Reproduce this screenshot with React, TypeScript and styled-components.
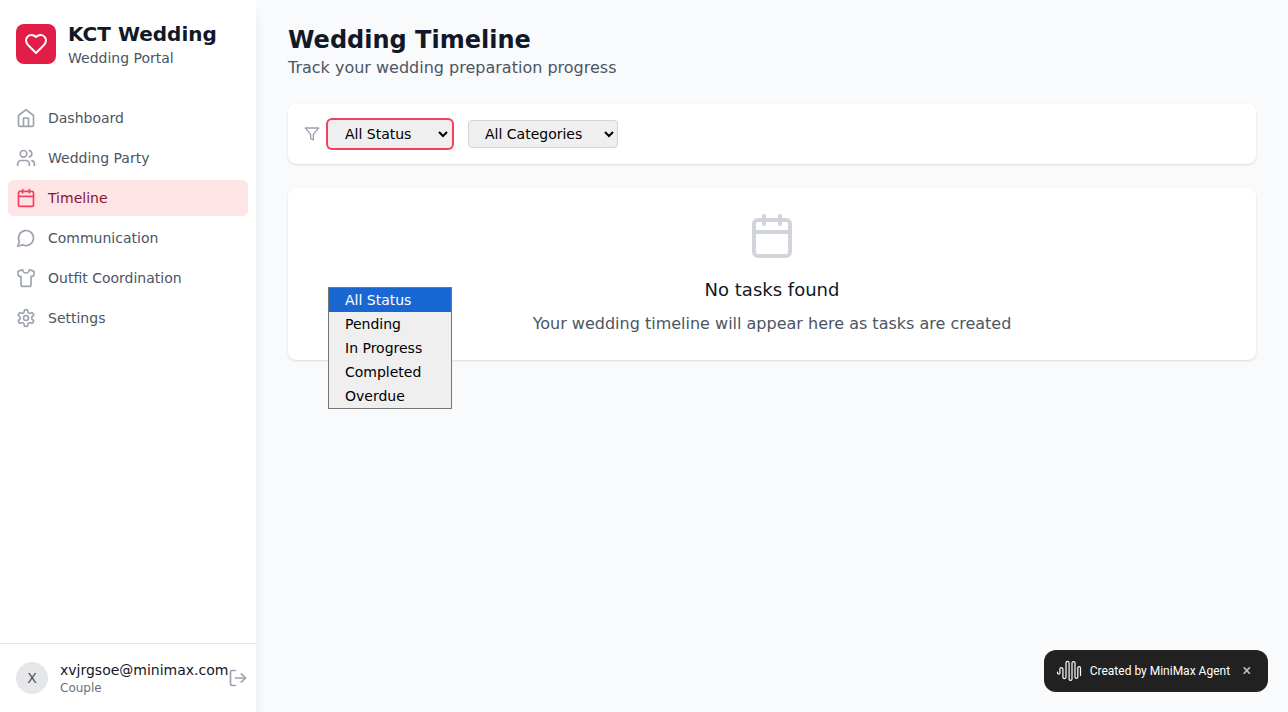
import React from 'react';
import styled, { createGlobalStyle, css } from 'styled-components';
import { Users, Calendar, Shirt, LogOut } from 'lucide-react';

const GlobalStyle = createGlobalStyle`
  *, *::before, *::after { box-sizing: border-box; }
  body { margin: 0; background: #f9fafb; font-family: "DejaVu Sans", sans-serif; line-height: 1.5; color: #111827; }
  h1, h2, h3, p { margin: 0; }
  button, select { font-family: inherit; }
`;

const Shell = styled.div`
  display: flex;
  height: 100vh;
  overflow: hidden;
  background: #f9fafb;
`;

const Sidebar = styled.aside`
  display: flex;
  flex-direction: column;
  flex: none;
  width: 256px;
  background: #fff;
  box-shadow: 0 10px 15px -3px rgba(0, 0, 0, 0.1), 0 4px 6px -4px rgba(0, 0, 0, 0.1);
`;

const Brand = styled.div`
  display: flex;
  align-items: center;
  gap: 12px;
  padding: 20px 16px 0;
`;

const BrandMark = styled.div`
  display: grid;
  place-items: center;
  width: 40px;
  height: 40px;
  border-radius: 8px;
  background: #e11d48;
  color: #fff;
`;

const BrandName = styled.h1`
  font-size: 20px;
  line-height: 28px;
  font-weight: 700;
`;

const BrandSub = styled.p`
  font-size: 14px;
  line-height: 20px;
  color: #4b5563;
`;

const Nav = styled.nav`
  display: flex;
  flex-direction: column;
  flex: 1;
  gap: 4px;
  padding: 32px 8px 0;
`;

const NavItem = styled.a<{ $active?: boolean }>`
  display: flex;
  align-items: center;
  gap: 12px;
  height: 36px;
  padding: 8px;
  border-radius: 6px;
  font-size: 14px;
  line-height: 20px;
  color: #4b5563;
  svg { color: #9ca3af; }
  ${({ $active }) => $active && css`
    background: #ffe4e6;
    color: #881337;
    svg { color: #f43f5e; }
  `}
`;

const Account = styled.div`
  display: flex;
  align-items: center;
  height: 69px;
  padding: 16px;
  border-top: 1px solid #e5e7eb;
`;

const Avatar = styled.div`
  display: grid;
  place-items: center;
  flex: none;
  width: 32px;
  height: 32px;
  margin-right: 12px;
  border-radius: 50%;
  background: #e5e7eb;
  color: #4b5563;
  font-size: 14px;
`;

const Email = styled.p`
  font-size: 14px;
  line-height: 20px;
`;

const Role = styled.p`
  font-size: 12px;
  line-height: 16px;
  color: #6b7280;
`;

const LogoutButton = styled.button`
  display: flex;
  flex: none;
  padding: 0;
  border: 0;
  background: none;
  color: #9ca3af;
`;

const Main = styled.main`
  display: flex;
  flex-direction: column;
  flex: 1;
  gap: 24px;
  padding: 24px 32px;
`;

const Title = styled.h1`
  font-size: 24px;
  line-height: 32px;
  font-weight: 700;
`;

const Subtitle = styled.p`
  font-size: 16px;
  line-height: 24px;
  color: #4b5563;
`;

const Card = styled.section`
  border-radius: 8px;
  background: #fff;
  box-shadow: 0 1px 3px rgba(0, 0, 0, 0.1), 0 1px 2px -1px rgba(0, 0, 0, 0.1);
`;

const FilterBar = styled(Card)`
  display: flex;
  align-items: center;
  height: 60px;
  padding: 16px;
  color: #9ca3af;
`;

const SelectWrap = styled.div<{ $width: number; $gap: number }>`
  position: relative;
  width: ${({ $width }) => $width}px;
  margin-left: ${({ $gap }) => $gap}px;
`;

const Select = styled.select<{ $focused?: boolean }>`
  display: block;
  width: 100%;
  height: 28px;
  padding: 4px 12px;
  border: 1px solid #d1d5db;
  border-radius: 4px;
  background: #efefef;
  color: #000;
  font-size: 14px;
  line-height: 20px;
  outline: none;
  ${({ $focused }) => $focused && css`
    border-color: transparent;
    box-shadow: 0 0 0 2px #f43f5e;
  `}
`;

const Menu = styled.div`
  position: absolute;
  top: 167px;
  left: 0;
  width: 124px;
  border: 1px solid #767676;
  background: #efefef;
  color: #000;
`;

const MenuItem = styled.div<{ $selected?: boolean }>`
  height: 24px;
  padding: 0 16px;
  font-size: 14px;
  line-height: 24px;
  white-space: nowrap;
  ${({ $selected }) => $selected && css`
    background: #1967d2;
    color: #fff;
  `}
`;

const Empty = styled(Card)`
  display: flex;
  flex-direction: column;
  align-items: center;
  height: 172px;
  padding-top: 24px;
  color: #d1d5db;
`;

const EmptyTitle = styled.h3`
  margin-top: 16px;
  font-size: 18px;
  line-height: 28px;
  font-weight: 400;
  color: #111827;
`;

const EmptyText = styled.p`
  margin-top: 8px;
  font-size: 16px;
  line-height: 24px;
  color: #4b5563;
`;

const Badge = styled.div`
  position: fixed;
  right: 20px;
  bottom: 20px;
  display: flex;
  align-items: center;
  width: 224px;
  height: 42px;
  padding: 0 12px;
  border-radius: 12px;
  background: #212121;
  color: #fff;
  font-family: Roboto, sans-serif;
  font-size: 12px;
  font-weight: 400;
`;

const BadgeText = styled.span`
  margin-left: 7.7px;
  white-space: nowrap;
`;

const BadgeClose = styled.span`
  margin-left: auto;
  margin-right: 5px;
  font-size: 16px;
  line-height: 16px;
  font-weight: 500;
  color: #bdbdbd;
`;

const Wave = () => (
  <svg width="26" height="24" viewBox="0 0 26 24" fill="none" stroke="#f5f5f5" strokeWidth="1.25" strokeLinecap="round">
    <path d="M1.5 13v1a1.2 1.2 0 0 0 2.4 0v-4a1.5 1.5 0 0 1 3 0v8a1.55 1.55 0 0 0 3.1 0V4a1.55 1.55 0 0 1 3.1 0v16a1.45 1.45 0 0 0 2.9 0V4a1.5 1.5 0 0 1 3 0v14a1.4 1.4 0 0 0 2.8 0V9a1.35 1.35 0 0 1 2.7 0v7.5" />
  </svg>
);

const HeartIcon = () => (
  <svg width="24" height="24" viewBox="0 0 24 24" fill="none" stroke="currentColor" strokeWidth="2" strokeLinecap="round" strokeLinejoin="round">
    <path d="M19 14c1.49-1.46 3-3.21 3-5.5A5.5 5.5 0 0 0 16.5 3c-1.76 0-3 .5-4.5 2-1.5-1.5-2.74-2-4.5-2A5.5 5.5 0 0 0 2 8.5c0 2.3 1.5 4.05 3 5.5l7 7Z" />
  </svg>
);

const HomeIcon = () => (
  <svg width="20" height="20" viewBox="0 0 24 24" fill="none" stroke="currentColor" strokeWidth="2" strokeLinecap="round" strokeLinejoin="round">
    <path d="m3 9 9-7 9 7v11a2 2 0 0 1-2 2H5a2 2 0 0 1-2-2z" />
    <path d="M9 22V12h6v10" />
  </svg>
);

const ChatIcon = () => (
  <svg width="20" height="20" viewBox="0 0 24 24" fill="none" stroke="currentColor" strokeWidth="2" strokeLinecap="round" strokeLinejoin="round">
    <path d="M7.9 20A9 9 0 1 0 4 16.1L2 22Z" />
  </svg>
);

const GearIcon = () => (
  <svg width="20" height="20" viewBox="0 0 24 24" fill="none" stroke="currentColor" strokeWidth="2" strokeLinecap="round" strokeLinejoin="round">
    <path d="M12.22 2h-.44a2 2 0 0 0-2 2v.18a2 2 0 0 1-1 1.73l-.43.25a2 2 0 0 1-2 0l-.15-.08a2 2 0 0 0-2.73.73l-.22.38a2 2 0 0 0 .73 2.73l.15.1a2 2 0 0 1 1 1.72v.51a2 2 0 0 1-1 1.74l-.15.09a2 2 0 0 0-.73 2.73l.22.38a2 2 0 0 0 2.73.73l.15-.08a2 2 0 0 1 2 0l.43.25a2 2 0 0 1 1 1.73V20a2 2 0 0 0 2 2h.44a2 2 0 0 0 2-2v-.18a2 2 0 0 1 1-1.73l.43-.25a2 2 0 0 1 2 0l.15.08a2 2 0 0 0 2.73-.73l.22-.39a2 2 0 0 0-.73-2.73l-.15-.08a2 2 0 0 1-1-1.74v-.5a2 2 0 0 1 1-1.74l.15-.09a2 2 0 0 0 .73-2.73l-.22-.38a2 2 0 0 0-2.73-.73l-.15.08a2 2 0 0 1-2 0l-.43-.25a2 2 0 0 1-1-1.73V4a2 2 0 0 0-2-2z" />
    <circle cx="12" cy="12" r="3" />
  </svg>
);

const FunnelIcon = () => (
  <svg width="16" height="16" viewBox="0 0 24 24" fill="none" stroke="currentColor" strokeWidth="2" strokeLinecap="round" strokeLinejoin="round">
    <polygon points="22 3 2 3 10 12.46 10 19 14 21 14 12.46 22 3" />
  </svg>
);

const navItems = [
  { label: 'Dashboard', icon: <HomeIcon /> },
  { label: 'Wedding Party', icon: <Users size={20} /> },
  { label: 'Timeline', icon: <Calendar size={20} />, active: true },
  { label: 'Communication', icon: <ChatIcon /> },
  { label: 'Outfit Coordination', icon: <Shirt size={20} /> },
  { label: 'Settings', icon: <GearIcon /> },
];

const statuses = ['All Status', 'Pending', 'In Progress', 'Completed', 'Overdue'];

export default function App() {
  return (
    <>
      <GlobalStyle />
      <Shell>
        <Sidebar>
          <Brand>
            <BrandMark><HeartIcon /></BrandMark>
            <div>
              <BrandName>KCT Wedding</BrandName>
              <BrandSub>Wedding Portal</BrandSub>
            </div>
          </Brand>
          <Nav>
            {navItems.map(({ label, icon, active }) => (
              <NavItem key={label} $active={active}>{icon}{label}</NavItem>
            ))}
          </Nav>
          <Account>
            <Avatar>X</Avatar>
            <div>
              <Email>xvjrgsoe@minimax.com</Email>
              <Role>Couple</Role>
            </div>
            <LogoutButton aria-label="Sign out"><LogOut size={20} /></LogoutButton>
          </Account>
        </Sidebar>
        <Main>
          <header>
            <Title>Wedding Timeline</Title>
            <Subtitle>Track your wedding preparation progress</Subtitle>
          </header>
          <FilterBar>
            <FunnelIcon />
            <SelectWrap $width={124} $gap={8}>
              <Select $focused defaultValue="All Status">
                {statuses.map((s) => <option key={s}>{s}</option>)}
              </Select>
              <Menu>
                {statuses.map((s, i) => <MenuItem key={s} $selected={i === 0}>{s}</MenuItem>)}
              </Menu>
            </SelectWrap>
            <SelectWrap $width={150} $gap={16}>
              <Select><option>All Categories</option></Select>
            </SelectWrap>
          </FilterBar>
          <Empty>
            <Calendar size={48} />
            <EmptyTitle>No tasks found</EmptyTitle>
            <EmptyText>Your wedding timeline will appear here as tasks are created</EmptyText>
          </Empty>
        </Main>
      </Shell>
      <Badge>
        <Wave />
        <BadgeText>Created by MiniMax Agent</BadgeText>
        <BadgeClose>×</BadgeClose>
      </Badge>
    </>
  );
}
